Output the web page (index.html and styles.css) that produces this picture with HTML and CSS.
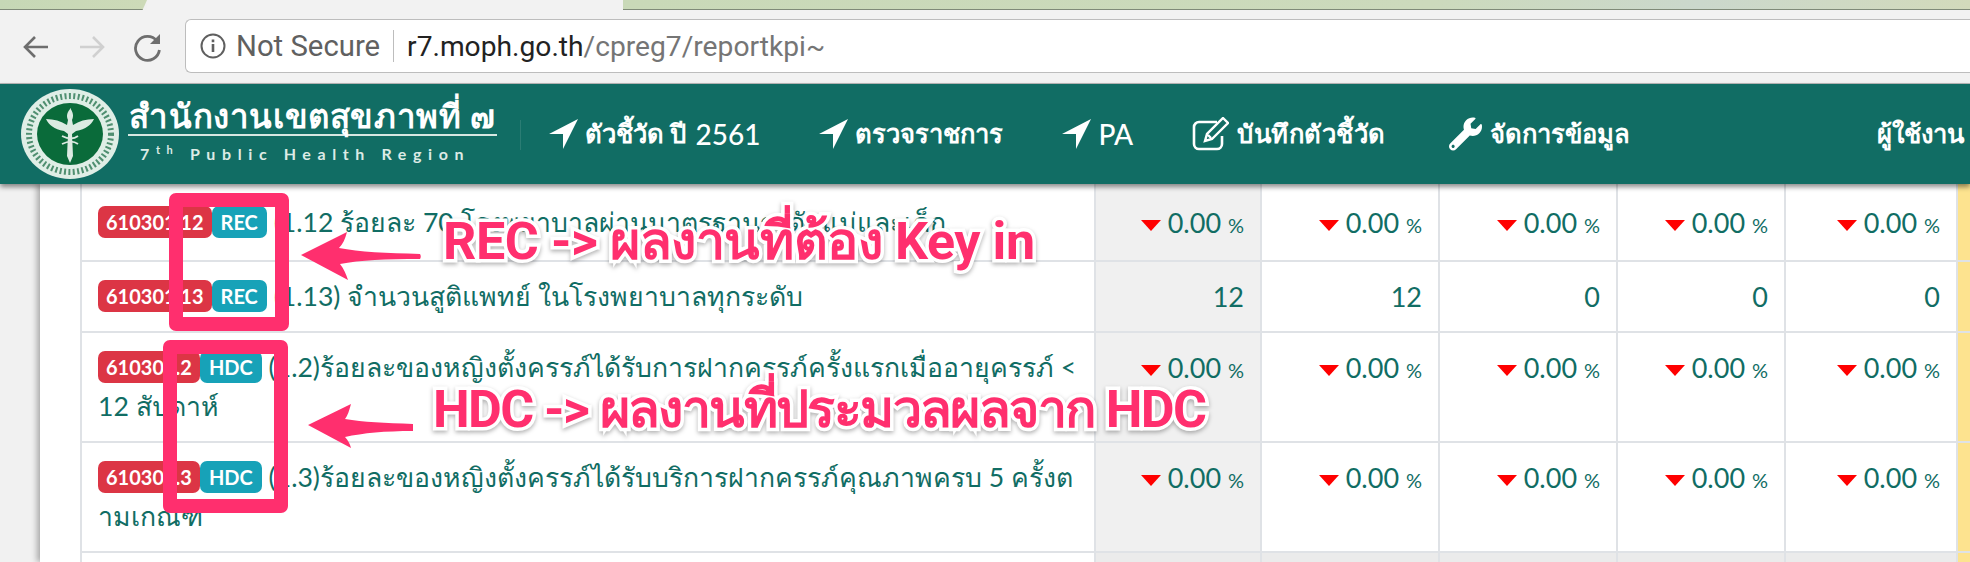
FILE: index.html
```html
<!DOCTYPE html>
<html lang="th">
<head>
<meta charset="utf-8">
<title>reportkpi</title>
<link rel="stylesheet" href="styles.css">
</head>
<body>
<div class="tabs">
  <div class="tab-bg left"></div>
  <div class="tab-active"></div>
  <div class="tab-bg right"></div>
</div>
<div class="toolbar">
  <svg class="tool" viewBox="0 0 30 30"><path d="M27 15H4M14 5L4 15l10 10" fill="none" stroke="#6e6e6e" stroke-width="2.6"/></svg>
  <svg class="tool" viewBox="0 0 30 30"><path d="M3 15h23M16 5l10 10-10 10" fill="none" stroke="#d0d0d0" stroke-width="2.6"/></svg>
  <svg class="tool" viewBox="0 0 30 30"><path d="M24 9a12 12 0 1 0 2.4 9" fill="none" stroke="#6e6e6e" stroke-width="2.8"/><path d="M27 2v10H17z" fill="#6e6e6e"/></svg>
  <div class="omnibox">
    <svg class="info" viewBox="0 0 26 26"><circle cx="13" cy="13" r="11.5" fill="none" stroke="#5f5f5f" stroke-width="2"/><path d="M11.7 11h2.6v8h-2.6zM11.7 6.6h2.6v2.6h-2.6z" fill="#5f5f5f"/></svg>
    <span class="secure">Not Secure</span>
    <span class="sep"></span>
    <span class="url"><b>r7.moph.go.th</b>/cpreg7/reportkpi~</span>
  </div>
</div>
<nav class="nav">
  <div class="brand">
    <svg class="logo" viewBox="0 0 100 92">
      <ellipse cx="50" cy="46" rx="49" ry="45" fill="#dfeee6"/>
      <ellipse cx="50" cy="46" rx="41" ry="38" fill="none" stroke="#4f8f70" stroke-width="6" stroke-dasharray="2 2.4"/>
      <ellipse cx="50" cy="46" rx="33" ry="31" fill="#0a6b3a"/>
      <path d="M50 20c3 4 4 8 2 12l1 5c6-4 13-6 21-6-3 6-8 10-18 12l-4 3 1 22-3 7-3-7 1-22-4-3c-10-2-15-6-18-12 8 0 15 2 21 6l1-5c-2-4-1-8 3-12z" fill="#dcebe2"/>
      <path d="M42 48c6 3 12 3 16 0M42 56c6-3 12-3 16 0" fill="none" stroke="#dcebe2" stroke-width="1.8"/>
    </svg>
    <div class="brand-text">
      <div class="brand-th">สำนักงานเขตสุขภาพที่ ๗</div>
      <div class="brand-en">7<sup>th</sup> Public Health Region</div>
    </div>
    <span class="brand-div"></span>
  </div>
  <a class="item"><svg class="ico-arrow" viewBox="0 0 29 30"><path d="M0 15L29 0 14 30V15z"/></svg>ตัวชี้วัด ปี&nbsp;<span class="lat year">2561</span></a>
  <a class="item"><svg class="ico-arrow" viewBox="0 0 29 30"><path d="M0 15L29 0 14 30V15z"/></svg>ตรวจราชการ</a>
  <a class="item"><svg class="ico-arrow" viewBox="0 0 29 30"><path d="M0 15L29 0 14 30V15z"/></svg><span class="lat">PA</span></a>
  <a class="item wide"><svg class="ico-edit" viewBox="0 0 37 34"><path d="M25 5H7a5 5 0 0 0-5 5v17a5 5 0 0 0 5 5h18a5 5 0 0 0 5-5v-8" fill="none" stroke="#fff" stroke-width="2.6"/><path d="M31 1l5 5-16 16-7 2 2-7zM16 18l3 3" fill="none" stroke="#fff" stroke-width="2.4"/></svg>บันทึกตัวชี้วัด</a>
  <a class="item last"><svg class="ico-wrench" viewBox="0 0 512 512"><path d="M507.73 109.1c-2.24-9.03-13.54-12.09-20.12-5.51l-74.36 74.36-67.88-11.31-11.31-67.88 74.36-74.36c6.62-6.62 3.43-17.9-5.66-20.16-47.38-11.74-99.55.91-136.58 37.93-39.64 39.64-50.55 97.1-34.05 147.2L18.74 402.76c-24.99 24.99-24.99 65.51 0 90.5 24.99 24.99 65.51 24.99 90.5 0l213.21-213.21c50.12 16.71 107.47 5.68 147.37-34.22 37.07-37.07 49.7-89.32 37.91-136.73zM64 472c-13.25 0-24-10.75-24-24 0-13.26 10.75-24 24-24s24 10.74 24 24c0 13.25-10.75 24-24 24z"/></svg>จัดการข้อมูล</a>
  <a class="item user">ผู้ใช้งาน</a>
</nav>
<main class="sheet">
  <table class="kpi">
    <colgroup><col class="c-name"><col class="c-a"><col class="c-b"><col class="c-c"><col class="c-d"><col class="c-e"><col class="c-y"></colgroup>
    <tbody>
      <tr class="row-first">
        <td class="name"><span class="badge red">610301.12</span><span class="badge blue">REC</span> (1.12 ร้อยละ 70 โรงพยาบาลผ่านมาตรฐานระดับแม่และเด็ก</td>
        <td class="val shade"><i class="tri"></i>0.00 <small>%</small></td>
        <td class="val"><i class="tri"></i>0.00 <small>%</small></td>
        <td class="val"><i class="tri"></i>0.00 <small>%</small></td>
        <td class="val"><i class="tri"></i>0.00 <small>%</small></td>
        <td class="val"><i class="tri"></i>0.00 <small>%</small></td>
        <td class="yellow"></td>
      </tr>
      <tr>
        <td class="name"><span class="badge red">610301.13</span><span class="badge blue">REC</span> (1.13) จำนวนสูติแพทย์ ในโรงพยาบาลทุกระดับ</td>
        <td class="val shade">12</td>
        <td class="val">12</td>
        <td class="val">0</td>
        <td class="val">0</td>
        <td class="val">0</td>
        <td class="yellow"></td>
      </tr>
      <tr>
        <td class="name"><span class="badge red">610301.2</span><span class="badge blue">HDC</span> (1.2)ร้อยละของหญิงตั้งครรภ์ได้รับการฝากครรภ์ครั้งแรกเมื่ออายุครรภ์ &lt; 12 สัปดาห์</td>
        <td class="val shade"><i class="tri"></i>0.00 <small>%</small></td>
        <td class="val"><i class="tri"></i>0.00 <small>%</small></td>
        <td class="val"><i class="tri"></i>0.00 <small>%</small></td>
        <td class="val"><i class="tri"></i>0.00 <small>%</small></td>
        <td class="val"><i class="tri"></i>0.00 <small>%</small></td>
        <td class="yellow"></td>
      </tr>
      <tr>
        <td class="name"><span class="badge red">610301.3</span><span class="badge blue">HDC</span> (1.3)ร้อยละของหญิงตั้งครรภ์ได้รับบริการฝากครรภ์คุณภาพครบ 5 ครั้งตามเกณฑ์</td>
        <td class="val shade"><i class="tri"></i>0.00 <small>%</small></td>
        <td class="val"><i class="tri"></i>0.00 <small>%</small></td>
        <td class="val"><i class="tri"></i>0.00 <small>%</small></td>
        <td class="val"><i class="tri"></i>0.00 <small>%</small></td>
        <td class="val"><i class="tri"></i>0.00 <small>%</small></td>
        <td class="yellow"></td>
      </tr>
      <tr class="row-total">
        <td class="name"></td><td class="val grey"></td><td class="val grey"></td><td class="val grey"></td><td class="val grey"></td><td class="val grey"></td><td class="yellow"></td>
      </tr>
    </tbody>
  </table>
</main>
<div class="mark box-rec"></div>
<div class="mark box-hdc"></div>
<svg class="mark arrow-rec" viewBox="0 0 120 48"><path d="M0 23L46 0c-2 7-4 12-8 16 20 4 48 5 81 6 1 2 1 3 0 5-34 0-60 1-80 5 4 5 6 10 8 16z"/></svg>
<svg class="mark arrow-hdc" viewBox="0 0 106 44"><path d="M0 21L43 0c-2 7-3 11-6 15 18 3 40 4 68 5v7c-28 0-50 2-68 6 3 3 5 7 6 11z"/></svg>
<div class="mark note note-rec">REC -&gt; ผลงานที่ต้อง Key in</div>
<div class="mark note note-hdc">HDC -&gt; ผลงานที่ประมวลผลจาก HDC</div>
</body>
</html>
```
FILE: styles.css
```css
*{box-sizing:border-box}
html,body{margin:0;padding:0;height:562px;overflow:hidden;background:#f1f1f1}
body{position:relative;font-family:Lato,"Noto Sans",sans-serif;color:#116d64}
.tabs{display:flex;height:10px}
.tab-bg{background:linear-gradient(90deg,#c6d8b6,#cddab8);border-bottom:1px solid #7f8a78}
.tab-bg.left{width:147px;clip-path:polygon(0 0,100% 0,97% 100%,0 100%)}
.tab-active{width:476px;background:#f2f2f2}
.tab-bg.right{flex:1;background:linear-gradient(90deg,#c9d9b8,#ccdabc 60%,#cbd8cc 80%,#d2dabb)}
.toolbar{height:74px;background:#f2f2f2;border-bottom:1px solid #b9b9b9;display:flex;align-items:flex-start;padding:0 0 0 21px}
.tool{width:30px;height:30px;margin-top:22px;margin-right:26px;flex:none}
.omnibox{margin-top:9px;margin-left:-4px;flex:1;height:54px;background:#fff;border:1px solid #bdbdbd;border-right:0;border-radius:6px 0 0 6px;display:flex;align-items:center;padding-left:14px;font-family:Roboto,sans-serif;font-size:28.2px;color:#757575;white-space:nowrap}
.info{width:26px;height:26px;flex:none;margin-right:10px}
.secure{color:#606060;font-size:29.3px}
.sep{width:1px;height:32px;background:#bdbdbd;margin:0 13px}
.url b{font-weight:400;color:#222}
.nav{position:relative;z-index:2;height:100px;background:#116d64;box-shadow:0 3px 5px rgba(0,0,0,.45);display:flex;align-items:center;color:#fff;white-space:nowrap;padding-left:20px;font-size:25.6px;font-family:Lato,"Noto Sans",sans-serif;font-weight:700}
.lat{font-size:28px;font-weight:500}
.year{margin-left:3px}
.brand{display:flex;align-items:center;width:529px;flex:none;position:relative}
.logo{width:100px;height:92px;flex:none;filter:blur(.5px)}
.brand-text{margin-left:8px;margin-top:-8px;width:369px;font-weight:700}
.brand-th{font-size:33px;line-height:38px;border-bottom:2px solid #d7e8e2;text-align:center;letter-spacing:.6px}
.brand-en{font-size:16px;font-weight:700;letter-spacing:6.6px;margin-top:8px;padding-left:12px;line-height:20px;color:#dcebe6}
.brand-en sup{font-size:11px;line-height:0}
.brand-div{position:absolute;left:500px;top:32px;height:30px;width:1px;background:#2b7d74}
.item{display:flex;align-items:center;flex:none;margin-right:59px}
.item.wide{margin-right:63px;letter-spacing:.5px}
.item.last{margin-right:247px}
.ico-arrow{width:29px;height:30px;fill:#fff;margin-right:7px;flex:none}
.ico-edit{width:37px;height:34px;margin-right:8px;flex:none}
.ico-wrench{width:33px;height:34px;fill:#fff;margin-right:8px;flex:none}
.user{margin-right:0}
.sheet{position:relative;height:378px;margin-left:40px;background:#fff;box-shadow:-3px 0 6px rgba(0,0,0,.3);padding-left:40px;overflow:hidden}
.kpi{table-layout:fixed;border-collapse:collapse;width:1976px;font-size:26.6px;line-height:39px}
.c-name{width:1014px}.c-a{width:166px}.c-b{width:178px}.c-c{width:178px}.c-d{width:168px}.c-e{width:172px}.c-y{width:100px}
.kpi td{border:2px solid #dfe2e6;padding:15px 16px;vertical-align:top}
.kpi .row-first td{border-top:0;padding-top:19px}
.name{color:#116d64;word-break:break-all}
.val{text-align:right;font-size:27px}
.val small{font-size:20px}
.shade{background:#f0f0f0}
.grey{background:#ebebeb}
.kpi .yellow{background:#fde38f;padding:0}
.row-total td{height:60px}
.tri{display:inline-block;width:0;height:0;border-left:10px solid transparent;border-right:10px solid transparent;border-top:11px solid #f00;margin-right:7px;vertical-align:2px}
.badge{display:inline-block;height:32px;line-height:32px;padding:0 8px;border-radius:7px;color:#fff;font-size:20px;font-weight:700;vertical-align:2px}
.red{background:#dc3545}
.blue{background:#17a2b8;padding:0 9px}
.mark{position:absolute;z-index:5}
.box-rec{left:169px;top:193px;width:120px;height:138px;border:14px solid #ff2f6e;border-radius:7px}
.box-hdc{left:163px;top:340px;width:125px;height:173px;border:14px solid #ff2f6e;border-radius:7px}
.arrow-rec{left:301px;top:232px;width:120px;height:48px;fill:#ff2f6e}
.arrow-hdc{left:308px;top:404px;width:106px;height:44px;fill:#ff2f6e}
.note{font-family:Roboto,"Liberation Sans",sans-serif;font-weight:700;font-size:52px;line-height:60px;color:#ff2f6e;white-space:nowrap;-webkit-text-stroke:7px #fff;paint-order:stroke fill;filter:drop-shadow(0 2px 2px rgba(0,0,0,.3))}
.note-rec{left:443px;top:212px;letter-spacing:-.4px}
.note-hdc{left:433px;top:380px;letter-spacing:-1.6px}
```
